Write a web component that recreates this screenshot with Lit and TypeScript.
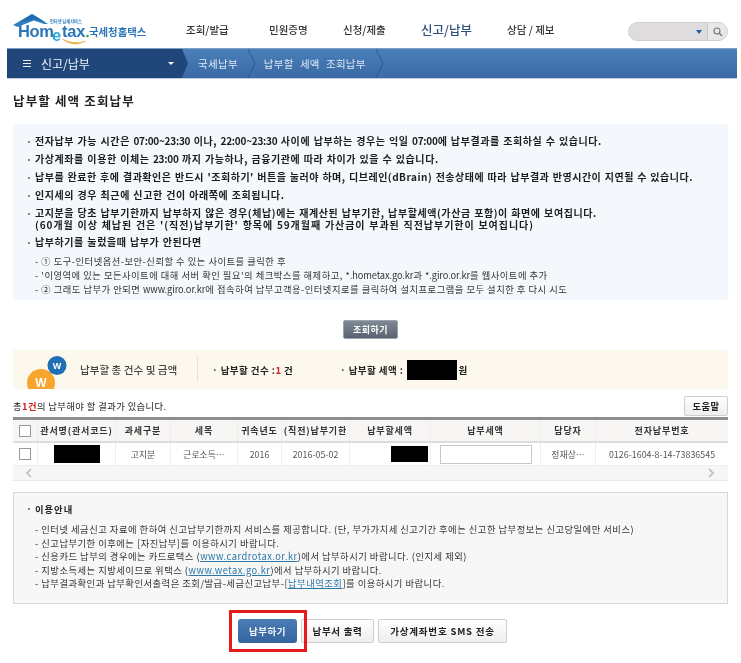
import { LitElement, html, css, svg } from "lit";
import { customElement } from "lit/decorators.js";

const KR = `"Noto Sans CJK KR", "Liberation Sans", sans-serif`;

@customElement("app-root")
export class AppRoot extends LitElement {
  static styles = css`
    :host { display: block; width: 741px; height: 663px; overflow: hidden; background: #fff; font-family: "Noto Sans CJK KR", "Liberation Sans", sans-serif; color: #222; font-size: 9.5px; filter: blur(.3px); }
    * { box-sizing: border-box; }
    *::before, *::after { box-sizing: border-box; }
    a { color: #2a78a8; text-decoration: underline; }
    .head { height: 48px; display: flex; align-items: flex-start; position: relative; }
    .logo { width: 150px; height: 48px; margin-left: 12px; flex: none; }
    .menu { display: flex; margin-left: 24px; padding-top: 22px; font-size: 10.5px; font-weight: 500; color: #333; line-height: 16px; }
    .menu span { white-space: nowrap; }
    .m1 { width: 83px; } .m2 { width: 74px; } .m3 { width: 78px; } .m4 { width: 86px; font-size: 12.5px; color: #2c4f7c; } .m5 { width: 93px; }
    .search { margin-left: 28px; margin-top: 22px; width: 100px; height: 19px; border-radius: 10px; background: #dedcdd; border: 1px solid #d0d0d0; display: flex; align-items: center; flex: none; }
    .search .t { flex: 1; display: flex; justify-content: flex-end; padding-right: 5px; }
    .search .b { width: 20px; height: 17px; border-left: 1px solid #c9c9c9; display: flex; align-items: center; justify-content: center; background: #e8e8e8; border-radius: 0 9px 9px 0; }
    .nav { margin-left: 7px; width: 730px; height: 31px; display: flex; align-items: center; background: linear-gradient(#4a7fb9, #3b6aa5); color: #dfe9f4; border-top: 1px solid #7fa1c8; border-bottom: 1px solid #bcd; font-size: 10.5px; }
    .nav .cur { width: 181px; height: 100%; background: #21477a; clip-path: polygon(0 0, 175px 0, 181px 50%, 175px 100%, 0 100%); color: #f2f5f9; display: flex; align-items: center; font-size: 12px; flex: none; }
    .burger { margin-left: 16px; width: 8px; height: 7px; border-top: 1px solid #eee; border-bottom: 1px solid #eee; position: relative; margin-right: 10px; }
    .burger::after { content: ""; position: absolute; left: 0; right: 0; top: 2px; height: 1px; background: #eee; }
    .tri { margin-left: 78px; width: 0; height: 0; border: 3px solid transparent; border-top: 3px solid #fff; border-bottom: 0; }
    .crumb { display: flex; align-items: center; height: 100%; letter-spacing: .3px; word-spacing: 3.5px; }
    .crumb span { white-space: nowrap; }
    .crumb .c1 { padding-left: 10px; }
    .crumb .c2 { padding-left: 8px; }
    .crumb svg { margin-left: 9px; }
    h1 { margin: 14px 0 0 13px; font-size: 12.5px; line-height: 16px; font-weight: 700; color: #222; letter-spacing: 1.15px; height: 16px; }
    .info { margin: 15px 13px 0; background: #f4f7fb; height: 176px; padding: 11px 0 0 22px; font-size: 10px; font-weight: 700; letter-spacing: .58px; word-spacing: .6px; color: #1c1c1c; position: relative; }
    .info p { margin: 0; line-height: 12px; white-space: nowrap; position: relative; height: 18px; }
    .info p::before, .guide .t::before { content: ""; position: absolute; left: -7px; top: 6px; width: 2px; height: 2px; background: #888; }
    .info p.two { height: 29px; line-height: 11.5px; }
    .info .tight { letter-spacing: .52px; }
    .info .wide { letter-spacing: .95px; }
    .num { letter-spacing: -.25px; }
    .sub { font-size: 9.3px; font-weight: 400; color: #333; letter-spacing: .5px; word-spacing: 0; }
    .sub div { line-height: 14px; white-space: nowrap; }
    .lat { letter-spacing: -.1px; }
    .action { display: flex; justify-content: center; margin-top: 20px; height: 19px; }
    .btn-dark { width: 55px; height: 19px; background: linear-gradient(#7f8a96, #59636f); border-radius: 2px; border: 1px solid #9aa3ad; color: #fff; font-size: 9px; font-weight: 700; display: flex; align-items: center; justify-content: center; letter-spacing: .5px; }
    .band { margin: 11px 13px 0; height: 39px; background: #fdf8ee; display: flex; align-items: center; position: relative; overflow: hidden; }
    .band .ico { width: 67px; height: 39px; flex: none; }
    .band .title { width: 117px; font-size: 10.6px; font-weight: 500; color: #444; flex: none; white-space: nowrap; }
    .band .sep { width: 1px; height: 25px; background: #e6e2d6; margin-right: 14px; flex: none; }
    .band .lbl { font-weight: 700; font-size: 9.5px; letter-spacing: .45px; color: #222; white-space: nowrap; }
    .red { color: #d2201c; }
    .redact { background: #000; display: inline-block; flex: none; }
    .tools { margin: 6px 13px 0; height: 22px; display: flex; align-items: center; justify-content: space-between; font-size: 9.3px; letter-spacing: .42px; color: #222; }
    .tools b { color: #d2201c; font-weight: 700; }
    .btn { background: linear-gradient(#fff, #eee); border: 1px solid #cfcfcf; border-radius: 2px; display: flex; align-items: center; justify-content: center; font-weight: 700; color: #222; white-space: nowrap; letter-spacing: .45px; }
    .help { width: 44px; height: 20px; font-size: 9.3px; }
    .tbl { margin: 0 13px; border-top: 3px solid #8e8e8e; }
    .row { display: grid; grid-template-columns: 25px 78px 55px 67px 44px 68px 81px 110px 55px 132px; }
    .row > div { display: flex; align-items: center; justify-content: center; border-right: 1px solid #eeeeee; white-space: nowrap; overflow: hidden; }
    .row > div:last-child { border-right: 0; }
    .hd { height: 23px; background: #f7f6f4; font-weight: 700; font-size: 9px; letter-spacing: .85px; color: #333; border-bottom: 2px solid #dcdcdc; }
    .bd { height: 23px; font-size: 8.8px; color: #555; letter-spacing: .05px; border-bottom: 1px solid #eee; }
    .chk { width: 12px; height: 12px; border: 1px solid #999; background: #fff; display: block; }
    .input { width: 92px; height: 19px; border: 1px solid #c8c8c8; background: #fff; }
    .scroll { height: 15px; background: #f6f6f6; border-bottom: 1px solid #e8e8e8; display: flex; justify-content: space-between; align-items: center; padding: 0 13px 0 12px; }
    .guide { margin: 11px 13px 0; height: 112px; background: #f7f7f7; border: 1px solid #d8d8d8; padding: 8px 0 0 21px; font-size: 9.3px; color: #333; letter-spacing: .5px; }
    .guide .t { font-weight: 700; line-height: 16px; position: relative; color: #222; letter-spacing: 1px; margin-bottom: 6px; }
    .guide .l { line-height: 13.6px; white-space: nowrap; }
    .guide .t::before { top: 7px; }
    .actions { display: flex; justify-content: center; gap: 4px; margin-top: 15px; height: 24px; padding-left: 4px; position: relative; }
    .primary { width: 59px; height: 24px; background: linear-gradient(#4a7cb6, #35659f); border-radius: 3px; color: #f3f6fa; font-size: 9.5px; font-weight: 700; display: flex; align-items: center; justify-content: center; letter-spacing: .5px; position: relative; }
    .primary::after { content: ""; position: absolute; left: -9px; top: -9px; width: 78px; height: 42px; border: 3px solid #e61c1c; }
    .actions .btn { height: 24px; font-size: 9.5px; }
    .b1 { width: 73px; letter-spacing: .7px; } .b2 { width: 129px; letter-spacing: .8px; }
  `;

  private logo() {
    return html`<svg class="logo" viewBox="0 0 150 48" width="150" height="48">
      <path d="M1 25 L20 14 L36 24 L32 24 L22 20.5 L9 25.5 L6 27 Z" fill="#2f7fc0"/>
      <path d="M8 22 L20 14 L33 22 L22 19 Z" fill="#1f6cb0"/>
      <text x="38" y="23" font-size="4.2" font-weight="700" fill="#2f7fc0" font-family=${KR}>인터넷 납세서비스</text>
      <text x="6" y="37" font-size="16.5" font-weight="700" fill="#2a76b8" font-family='"Liberation Sans", sans-serif' letter-spacing="-.4">Hom</text>
      <text x="40" y="41" font-size="16.5" font-weight="700" fill="#2fa7d4" font-family='"Liberation Sans", sans-serif'>e</text>
      <text x="50" y="37" font-size="16.5" font-weight="700" fill="#2a76b8" font-family='"Liberation Sans", sans-serif' letter-spacing="-.2">tax</text>
      <circle cx="75.5" cy="36" r="1.3" fill="#3aa23a"/>
      <path d="M50 39 Q62 48 74 41 Q62 45 50 39 Z" fill="#eda53a" stroke="#eda53a" stroke-width=".4"/>
      <text x="77" y="36" font-size="10.4" font-weight="700" fill="#2a76b8" font-family=${KR}>국세청홈택스</text>
    </svg>`;
  }

  private chevron() {
    return svg`<svg width="9" height="29" viewBox="0 0 9 29"><path d="M1 0 L8 14.5 L1 29" fill="none" stroke="#2c5a92" stroke-width="1"/></svg>`;
  }

  private badge() {
    return html`<svg class="ico" viewBox="0 0 67 39" width="67" height="39">
      <circle cx="28" cy="33" r="14" fill="#f7a52c"/>
      <text x="28" y="37" text-anchor="middle" font-size="12" font-weight="700" fill="#fff" font-family='"Liberation Sans", sans-serif'>W</text>
      <circle cx="44" cy="15.5" r="9.5" fill="#1f6fb5"/>
      <text x="44" y="19" text-anchor="middle" font-size="9" font-weight="700" fill="#fff" font-family='"Liberation Sans", sans-serif'>W</text>
    </svg>`;
  }

  render() {
    return html`
      <div class="head">
        ${this.logo()}
        <div class="menu">
          <span class="m1">조회/발급</span><span class="m2">민원증명</span><span class="m3">신청/제출</span><span class="m4">신고/납부</span><span class="m5">상담 / 제보</span>
        </div>
        <div class="search">
          <div class="t"><svg width="6" height="4" viewBox="0 0 6 4"><path d="M0 0h6L3 4z" fill="#1f5f9f"/></svg></div>
          <div class="b"><svg width="10" height="10" viewBox="0 0 10 10"><circle cx="4" cy="4" r="3" fill="none" stroke="#777" stroke-width="1.1"/><path d="M6.3 6.3L9 9" stroke="#777" stroke-width="1.4"/></svg></div>
        </div>
      </div>
      <div class="nav">
        <div class="cur"><span class="burger"></span><span>신고/납부</span><span class="tri"></span></div>
        <div class="crumb"><span class="c1">국세납부</span>${this.chevron()}<span class="c2">납부할 세액 조회납부</span>${this.chevron()}</div>
      </div>
      <h1>납부할 세액 조회납부</h1>
      <div class="info">
        <p>전자납부 가능 시간은 <span class="num">07:00~23:30</span> 이나, <span class="num">22:00~23:30</span> 사이에 납부하는 경우는 익일 <span class="num">07:00</span>에 납부결과를 조회하실 수 있습니다.</p>
        <p>가상계좌를 이용한 이체는 <span class="num">23:00</span> 까지 가능하나, 금융기관에 따라 차이가 있을 수 있습니다.</p>
        <p class="tight">납부를 완료한 후에 결과확인은 반드시 '조회하기' 버튼을 눌러야 하며, 디브레인(dBrain) 전송상태에 따라 납부결과 반영시간이 지연될 수 있습니다.</p>
        <p>인지세의 경우 최근에 신고한 건이 아래쪽에 조회됩니다.</p>
        <p class="two">고지분을 당초 납부기한까지 납부하지 않은 경우(체납)에는 재계산된 납부기한, 납부할세액(가산금 포함)이 화면에 보여집니다.<br><span class="wide">(60개월 이상 체납된 건은 '(직전)납부기한' 항목에 59개월째 가산금이 부과된 직전납부기한이 보여집니다)</span></p>
        <p>납부하기를 눌렀을때 납부가 안된다면</p>
        <div class="sub">
          <div>- ① 도구-인터넷옵션-보안-신뢰할 수 있는 사이트를 클릭한 후</div>
          <div>- '이영역에 있는 모든사이트에 대해 서버 확인 필요'의 체크박스를 해제하고, <span class="lat">*.hometax.go.kr</span>과 <span class="lat">*.giro.or.kr</span>를 웹사이트에 추가</div>
          <div>- ② 그래도 납부가 안되면 <span class="lat">www.giro.or.kr</span>에 접속하여 납부고객용-인터넷지로를 클릭하여 설치프로그램을 모두 설치한 후 다시 시도</div>
        </div>
      </div>
      <div class="action"><div class="btn-dark">조회하기</div></div>
      <div class="band">
        ${this.badge()}
        <div class="title">납부할 총 건수 및 금액</div>
        <div class="sep"></div>
        <div class="lbl" style="width:128px">· 납부할 건수 :<span class="red">1</span> 건</div>
        <div class="lbl">· 납부할 세액 :</div>
        <span class="redact" style="width:50px;height:20px;margin:0 1px 0 4px"></span>
        <div class="lbl">원</div>
      </div>
      <div class="tools">
        <span>총<b>1건</b>의 납부해야 할 결과가 있습니다.</span>
        <div class="btn help">도움말</div>
      </div>
      <div class="tbl">
        <div class="row hd">
          <div><span class="chk"></span></div><div>관서명(관서코드)</div><div>과세구분</div><div>세목</div><div>귀속년도</div><div>(직전)납부기한</div><div>납부할세액</div><div>납부세액</div><div>담당자</div><div>전자납부번호</div>
        </div>
        <div class="row bd">
          <div><span class="chk"></span></div><div><span class="redact" style="width:46px;height:18px"></span></div><div>고지분</div><div>근로소득…</div><div>2016</div><div>2016-05-02</div><div style="justify-content:flex-end;padding-right:2px"><span class="redact" style="width:37px;height:16px"></span></div><div><span class="input"></span></div><div>정재상…</div><div>0126-1604-8-14-73836545</div>
        </div>
        <div class="scroll">
          <svg width="8" height="10" viewBox="0 0 8 10"><path d="M6 1L2 5l4 4" fill="none" stroke="#bbb" stroke-width="1.6"/></svg>
          <svg width="8" height="10" viewBox="0 0 8 10"><path d="M2 1l4 4-4 4" fill="none" stroke="#bbb" stroke-width="1.6"/></svg>
        </div>
      </div>
      <div class="guide">
        <div class="t">이용안내</div>
        <div class="l">- 인터넷 세금신고 자료에 한하여 신고납부기한까지 서비스를 제공합니다. (단, 부가가치세 신고기간 후에는 신고한 납부정보는 신고당일에만 서비스)</div>
        <div class="l">- 신고납부기한 이후에는 [자진납부]를 이용하시기 바랍니다.</div>
        <div class="l">- 신용카드 납부의 경우에는 카드로택스 (<a>www.cardrotax.or.kr</a>)에서 납부하시기 바랍니다. (인지세 제외)</div>
        <div class="l">- 지방소득세는 지방세이므로 위택스 (<a>www.wetax.go.kr</a>)에서 납부하시기 바랍니다.</div>
        <div class="l">- 납부결과확인과 납부확인서출력은 조회/발급-세금신고납부-[<a>납부내역조회</a>]를 이용하시기 바랍니다.</div>
      </div>
      <div class="actions">
        <div class="primary">납부하기</div>
        <div class="btn b1">납부서 출력</div>
        <div class="btn b2">가상계좌번호 SMS 전송</div>
      </div>
    `;
  }
}
